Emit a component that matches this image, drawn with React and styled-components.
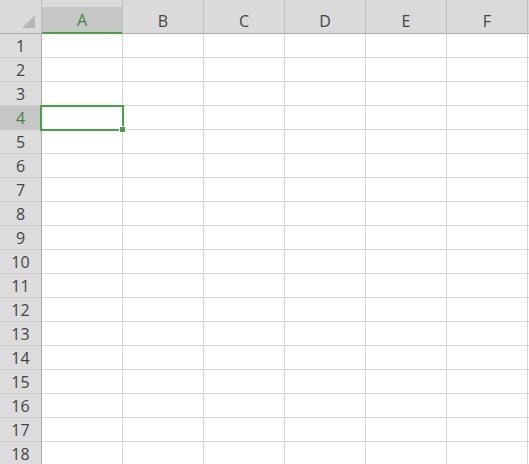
import React from "react";
import styled, { createGlobalStyle } from "styled-components";

const COLS = ["A", "B", "C", "D", "E", "F", ""];
const ROWS = Array.from({ length: 18 }, (_, i) => i + 1);
const SEL_COL = 0;
const SEL_ROW = 4;

const GlobalStyle = createGlobalStyle`
  html, body {
    margin: 0;
    padding: 0;
    background: #ffffff;
  }
`;

const Sheet = styled.div`
  width: 529px;
  height: 464px;
  overflow: hidden;
  display: grid;
  grid-template-columns: 42px repeat(7, 81px);
  grid-template-rows: 34px;
  grid-auto-rows: 24px;
  font-family: "Open Sans", "Noto Sans", sans-serif;
  font-size: 16px;
  color: #444444;
  background: #ffffff;
`;

const Corner = styled.div`
  position: relative;
  background: #dadada;
  border-right: 1px solid #bcbcbc;
  border-bottom: 1px solid #ababab;
  &::after {
    content: "";
    position: absolute;
    right: 6px;
    bottom: 5px;
    width: 0;
    height: 0;
    border-left: 13px solid transparent;
    border-bottom: 13px solid #b6b6b6;
  }
`;

const ColHead = styled.div`
  display: flex;
  align-items: center;
  justify-content: center;
  padding-top: 8px;
  box-sizing: border-box;
  background: ${(p) =>
    p.$active ? "linear-gradient(#dadada 0 7px, #c6c6c6 7px)" : "#dadada"};
  border-right: 1px solid #bfbfbf;
  border-bottom: ${(p) => (p.$active ? "2px solid #41a541" : "1px solid #ababab")};
  color: ${(p) => (p.$active ? "#3b8a3b" : "#444444")};
  line-height: 1;
`;

const RowHead = styled.div`
  display: flex;
  align-items: center;
  justify-content: center;
  padding-top: 1px;
  box-sizing: border-box;
  background: ${(p) => (p.$active ? "#c6c6c6" : "#dcdcdc")};
  border-right: 1px solid #ababab;
  border-bottom: 1px solid #c9c9c9;
  color: ${(p) => (p.$active ? "#3b8a3b" : "#444444")};
  line-height: 1;
`;

const Cell = styled.div`
  position: relative;
  border-right: 1px solid #d4d4d4;
  border-bottom: 1px solid #d4d4d4;
`;

const Selection = styled.div`
  position: absolute;
  top: -1px;
  left: -2px;
  right: -2px;
  bottom: -2px;
  border: 2px solid #41a541;
  z-index: 2;
`;

const FillHandle = styled.div`
  position: absolute;
  right: -4px;
  bottom: -4px;
  width: 5px;
  height: 5px;
  background: #41a541;
  border: 1px solid #ffffff;
`;

export default function App() {
  return (
    <>
      <GlobalStyle />
      <Sheet>
        <Corner />
        {COLS.map((c, i) => (
          <ColHead key={"h" + i} $active={i === SEL_COL}>
            {c}
          </ColHead>
        ))}
        {ROWS.map((r) => (
          <React.Fragment key={r}>
            <RowHead $active={r === SEL_ROW}>{r}</RowHead>
            {COLS.map((c, i) => (
              <Cell key={i}>
                {r === SEL_ROW && i === SEL_COL && (
                  <Selection>
                    <FillHandle />
                  </Selection>
                )}
              </Cell>
            ))}
          </React.Fragment>
        ))}
      </Sheet>
    </>
  );
}
